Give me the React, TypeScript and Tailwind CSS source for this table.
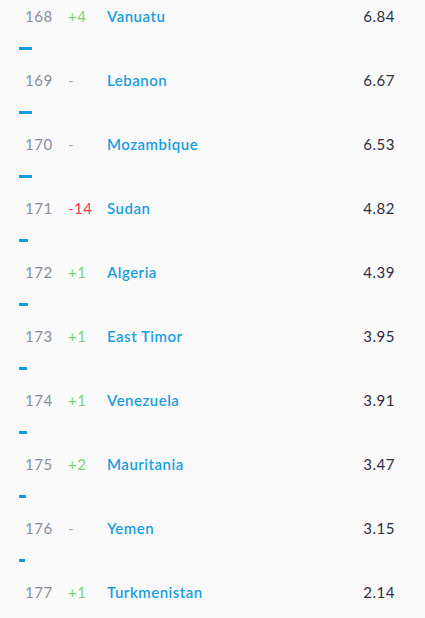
const rows = [
  { rank: 168, change: "+4", name: "Vanuatu", value: 6.84 },
  { rank: 169, change: "-", name: "Lebanon", value: 6.67 },
  { rank: 170, change: "-", name: "Mozambique", value: 6.53 },
  { rank: 171, change: "-14", name: "Sudan", value: 4.82 },
  { rank: 172, change: "+1", name: "Algeria", value: 4.39 },
  { rank: 173, change: "+1", name: "East Timor", value: 3.95 },
  { rank: 174, change: "+1", name: "Venezuela", value: 3.91 },
  { rank: 175, change: "+2", name: "Mauritania", value: 3.47 },
  { rank: 176, change: "-", name: "Yemen", value: 3.15 },
  { rank: 177, change: "+1", name: "Turkmenistan", value: 2.14 },
];

function changeColor(c: string) {
  if (c.startsWith("+")) return "text-[#7dd36c]";
  if (c === "-") return "text-[#a3a3ad]";
  return "text-[#f0355a]";
}

export default function App() {
  return (
    <div className="min-h-[618px] w-[425px] bg-[#fafafb] font-['Lato','Noto_Sans',sans-serif]">
      {rows.map((r, i) => (
        <div key={r.rank}>
          <div className="flex h-8 items-center pl-[25px] pr-[30px] text-[15px] tracking-[0.5px]">
            <span className="w-[43px] shrink-0 text-[#8a8c9c]">{r.rank}</span>
            <span className={`w-[39px] shrink-0 ${changeColor(r.change)}`}>{r.change}</span>
            <span className="font-semibold text-[#1a9ee0]">{r.name}</span>
            <span className="ml-auto text-[#2b2d42]">{r.value.toFixed(2)}</span>
          </div>
          {i < rows.length - 1 && (
            <div className="h-8 pl-[19px] pt-[15px]">
              <div className="h-[3px] bg-[#0a9fdf]" style={{ width: Math.round(r.value * 1.95) }} />
            </div>
          )}
        </div>
      ))}
    </div>
  );
}
